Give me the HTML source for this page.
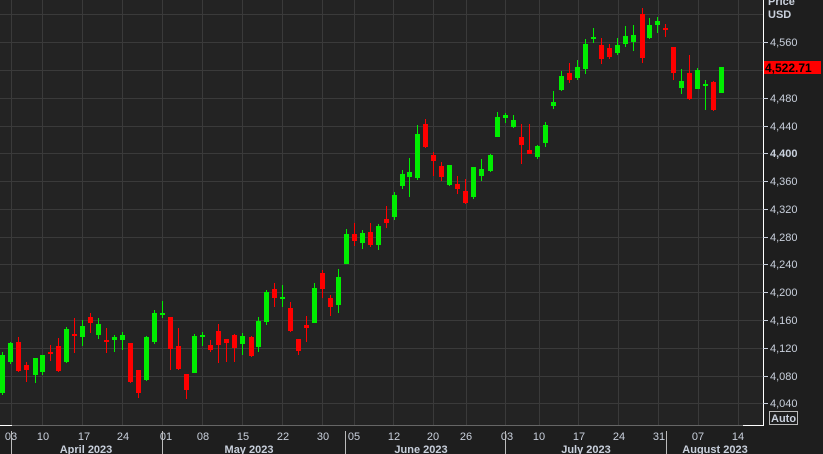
<!DOCTYPE html>
<html><head><meta charset="utf-8"><style>
html,body{margin:0;padding:0;background:#202020;width:823px;height:454px;overflow:hidden}
svg{display:block}
text{font-family:"Liberation Sans",sans-serif;fill:#c9d0dc}
</style></head><body>
<svg width="823" height="454" viewBox="0 0 823 454">
<rect x="0" y="0" width="763" height="425" fill="#232323"/>
<rect x="763" y="0" width="60" height="454" fill="#1e1e1e"/>
<rect x="0" y="425" width="763" height="29" fill="#1e1e1e"/>
<g stroke="#3a3a3a" stroke-width="1">
<line x1="0" x2="763" y1="42.5" y2="42.5"/><line x1="0" x2="763" y1="70.5" y2="70.5"/><line x1="0" x2="763" y1="98.5" y2="98.5"/><line x1="0" x2="763" y1="126.5" y2="126.5"/><line x1="0" x2="763" y1="153.5" y2="153.5"/><line x1="0" x2="763" y1="181.5" y2="181.5"/><line x1="0" x2="763" y1="209.5" y2="209.5"/><line x1="0" x2="763" y1="237.5" y2="237.5"/><line x1="0" x2="763" y1="264.5" y2="264.5"/><line x1="0" x2="763" y1="292.5" y2="292.5"/><line x1="0" x2="763" y1="320.5" y2="320.5"/><line x1="0" x2="763" y1="348.5" y2="348.5"/><line x1="0" x2="763" y1="376.5" y2="376.5"/><line x1="0" x2="763" y1="403.5" y2="403.5"/><line x1="0" x2="763" y1="14.5" y2="14.5"/>
<line y1="0" y2="425" x1="11.5" x2="11.5"/><line y1="0" y2="425" x1="42.5" x2="42.5"/><line y1="0" y2="425" x1="82.5" x2="82.5"/><line y1="0" y2="425" x1="122.5" x2="122.5"/><line y1="0" y2="425" x1="162.5" x2="162.5"/><line y1="0" y2="425" x1="202.5" x2="202.5"/><line y1="0" y2="425" x1="242.5" x2="242.5"/><line y1="0" y2="425" x1="282.5" x2="282.5"/><line y1="0" y2="425" x1="322.5" x2="322.5"/><line y1="0" y2="425" x1="354.5" x2="354.5"/><line y1="0" y2="425" x1="393.5" x2="393.5"/><line y1="0" y2="425" x1="433.5" x2="433.5"/><line y1="0" y2="425" x1="466.5" x2="466.5"/><line y1="0" y2="425" x1="505.5" x2="505.5"/><line y1="0" y2="425" x1="539.5" x2="539.5"/><line y1="0" y2="425" x1="578.5" x2="578.5"/><line y1="0" y2="425" x1="618.5" x2="618.5"/><line y1="0" y2="425" x1="658.5" x2="658.5"/><line y1="0" y2="425" x1="698.5" x2="698.5"/><line y1="0" y2="425" x1="738.5" x2="738.5"/>
</g>
<g id="c"></g>
<line x1="0" x2="763" y1="425.5" y2="425.5" stroke="#666"/>
<line x1="0" x2="12" y1="425.5" y2="425.5" stroke="#fff"/>
<line x1="743" x2="763" y1="425.5" y2="425.5" stroke="#fff"/>
<line x1="763.5" x2="763.5" y1="0" y2="426" stroke="#fff"/>
<g stroke="#c9d0dc"><line x1="763" x2="768" y1="42.5" y2="42.5"/><line x1="763" x2="768" y1="98.5" y2="98.5"/><line x1="763" x2="768" y1="126.5" y2="126.5"/><line x1="763" x2="768" y1="153.5" y2="153.5"/><line x1="763" x2="768" y1="181.5" y2="181.5"/><line x1="763" x2="768" y1="209.5" y2="209.5"/><line x1="763" x2="768" y1="237.5" y2="237.5"/><line x1="763" x2="768" y1="264.5" y2="264.5"/><line x1="763" x2="768" y1="292.5" y2="292.5"/><line x1="763" x2="768" y1="320.5" y2="320.5"/><line x1="763" x2="768" y1="348.5" y2="348.5"/><line x1="763" x2="768" y1="376.5" y2="376.5"/><line x1="763" x2="768" y1="403.5" y2="403.5"/></g>
<g font-size="11">
<text x="768" y="5" font-weight="bold">Price</text><text x="768" y="18" font-weight="bold">USD</text>
<text x="770" y="46">4,560</text><text x="770" y="102">4,480</text><text x="770" y="130">4,440</text><text x="770" y="157" font-weight="bold" fill="#e8ecf4">4,400</text><text x="770" y="185">4,360</text><text x="770" y="213">4,320</text><text x="770" y="241">4,280</text><text x="770" y="268">4,240</text><text x="770" y="296">4,200</text><text x="770" y="324">4,160</text><text x="770" y="352">4,120</text><text x="770" y="380">4,080</text><text x="770" y="407">4,040</text>
</g>
<rect x="764" y="61" width="57" height="13" fill="#ff0000"/>
<text x="765" y="72" font-size="12" font-weight="bold" style="fill:#000">4,522.71</text>
<rect x="769.5" y="411.5" width="28" height="13" fill="none" stroke="#bbb"/>
<text x="771" y="422" font-size="11" font-weight="bold">Auto</text>
<g font-size="11" text-anchor="middle">
<text x="11" y="440">03</text><text x="43" y="440">10</text><text x="84" y="440">17</text><text x="123" y="440">24</text><text x="166" y="440">01</text><text x="203" y="440">08</text><text x="243" y="440">15</text><text x="283" y="440">22</text><text x="323" y="440">30</text><text x="354" y="440">05</text><text x="394" y="440">12</text><text x="433" y="440">20</text><text x="466" y="440">26</text><text x="507" y="440">03</text><text x="539" y="440">10</text><text x="579" y="440">17</text><text x="619" y="440">24</text><text x="659" y="440">31</text><text x="698" y="440">07</text><text x="738" y="440">14</text>
</g>
<g font-size="11" font-weight="bold" text-anchor="middle">
<text x="86" y="453">April 2023</text><text x="249" y="453">May 2023</text><text x="421" y="453">June 2023</text><text x="586" y="453">July 2023</text><text x="715" y="453">August 2023</text>
</g>
<g stroke="#bbb"><line x1="11.5" x2="11.5" y1="431" y2="454"/><line x1="162.5" x2="162.5" y1="431" y2="454"/><line x1="345.5" x2="345.5" y1="431" y2="454"/><line x1="505.5" x2="505.5" y1="431" y2="454"/><line x1="666.5" x2="666.5" y1="431" y2="454"/></g>
</svg>
<script>
var d=[
[2,'g',355,393,352,395],[10,'g',343,362,342,364],[18,'r',342,371,337,372],[26,'r',365,370,362,382],[35,'g',358,375,358,383],[42,'g',355,372,355,375],[50,'r',352,354,345,361],[58,'r',346,371,338,372],[66,'g',329,362,327,363],[74,'r',334,336,318,353],[82,'g',326,337,320,346],[90,'r',317,323,313,333],[98,'g',324,335,318,339],[106,'r',340,342,328,353],[114,'g',337,340,335,352],[122,'g',335,340,332,350],[130,'r',343,382,343,383],[138,'r',370,393,370,398],[146,'g',337,380,336,381],[154,'g',313,342,310,344],[162,'g',313,315,301,318],[170,'r',317,349,317,370],[178,'r',346,369,328,370],[186,'r',374,390,374,399],[194,'g',336,373,334,373],[202,'g',335,337,332,346],[210,'r',345,350,340,352],[218,'r',331,345,324,363],[226,'r',339,343,339,362],[234,'r',335,348,334,362],[242,'g',336,344,333,355],[251,'r',337,356,336,357],[258,'g',321,347,317,352],[266,'g',292,322,290,325],[274,'r',289,298,283,307],[282,'g',297,299,285,307],[290,'r',308,331,302,332],[298,'r',339,351,339,355],[306,'r',325,328,316,342],[314,'g',288,323,283,323],[322,'r',273,289,270,298],[330,'r',298,307,295,316],[338,'g',277,305,269,313],[346,'g',234,264,229,264],[354,'r',234,241,223,246],[362,'g',233,243,230,249],[370,'r',232,245,223,247],[378,'g',226,245,224,250],[386,'r',219,223,206,228],[394,'g',195,217,192,220],[402,'g',174,186,170,189],[409,'g',172,177,158,197],[417,'g',134,178,125,180],[425,'r',124,147,119,148],[433,'r',155,161,152,176],[441,'r',166,177,162,181],[449,'g',165,185,165,186],[457,'r',184,189,176,194],[465,'r',191,203,179,204],[473,'g',167,197,167,199],[481,'g',169,176,159,181],[490,'g',155,171,154,172],[497,'g',117,137,112,137],[505,'g',115,118,113,123],[513,'g',120,127,115,128],[521,'r',137,145,124,164],[529,'r',150,154,124,154],[537,'g',146,157,145,159],[545,'g',125,143,122,147],[553,'g',102,106,91,109],[561,'g',76,90,71,91],[569,'r',73,80,63,83],[577,'g',67,78,60,80],[585,'g',44,69,39,74],[593,'g',37,39,28,43],[601,'r',45,59,38,64],[609,'r',48,57,44,59],[617,'g',45,53,38,55],[625,'g',36,44,26,47],[633,'g',35,42,25,51],[642,'r',14,58,8,63],[649,'g',25,38,18,39],[657,'g',21,25,17,33],[665,'r',28,30,24,37],[673,'r',47,73,47,80],[681,'g',81,88,69,94],[689,'r',73,99,55,100],[697,'g',70,89,68,89],[705,'g',84,85,80,110],[713,'r',82,110,81,111],[721,'g',67,93,67,93]];
var s='';d.forEach(function(c){var col=c[1]=='g'?'#00ee00':'#ff0000';var h=Math.max(2,c[3]-c[2]);
s+='<rect x="'+c[0]+'" y="'+c[4]+'" width="1" height="'+(c[5]-c[4])+'" fill="'+col+'"/>';
s+='<rect x="'+(c[0]-2)+'" y="'+c[2]+'" width="5" height="'+h+'" fill="'+col+'"/>';});
document.getElementById('c').innerHTML=s;
</script>
</body></html>
